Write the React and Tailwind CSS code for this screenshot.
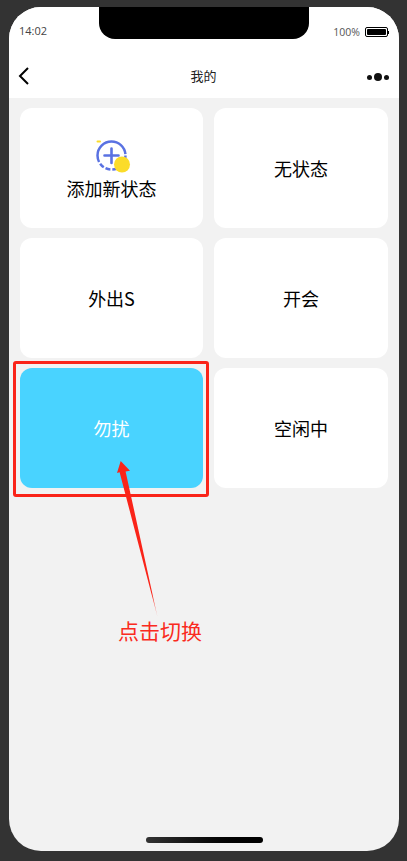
const font = { fontFamily: '"Noto Sans CJK SC", "Liberation Sans", sans-serif' };

function Card({ children, className = "" }) {
  return (
    <div className={`h-[120px] rounded-[12px] flex flex-col items-center justify-center text-[18px] leading-[24px] ${className}`}>
      {children}
    </div>
  );
}

function AddIcon() {
  return (
    <svg width="38" height="34" viewBox="0 0 38 34" className="block">
      <rect x="3.5" y="0.5" width="4.5" height="2" rx="1" fill="#fbdc2a" />
      <circle cx="18.5" cy="15.5" r="14" fill="none" stroke="#5a72e2" strokeWidth="2.5" strokeDasharray="14 2 5 2 5 2 5 2 49 2" />
      <circle cx="29" cy="24.5" r="8" fill="#fbdc2a" />
      <path d="M18.5 8.5V23M11.5 15.5H25.5" stroke="#5a72e2" strokeWidth="2.6" strokeLinecap="round" fill="none" />
    </svg>
  );
}

export default function App() {
  return (
    <div style={font} className="relative w-[407px] h-[861px] overflow-hidden bg-[#333333] pt-[7px] px-[9px]">
      <div className="relative w-[390px] h-[844px] rounded-[32px] overflow-hidden bg-[#f2f2f2] flex flex-col text-black">
        <div className="absolute left-[90px] top-0 w-[210px] h-[32px] bg-black rounded-b-[16px]" />
        <div className="bg-white h-[91px] shrink-0">
          <div className="h-[48px] flex items-start justify-between pl-[10px] pr-[10px] pt-[16px]">
            <span className="text-[11px] leading-[16px] text-[#444444]" style={{ fontFamily: '"Open Sans", sans-serif' }}>14:02</span>
            <div className="flex items-center gap-[5px] pt-[1px]">
              <span className="text-[10.5px] leading-[16px] text-[#555555]" style={{ fontFamily: '"Open Sans", sans-serif' }}>100%</span>
              <div className="flex items-center">
                <div className="w-[23px] h-[10px] border border-black rounded-[2px] p-[1px]">
                  <div className="w-full h-full bg-black rounded-[1px]" />
                </div>
                <div className="w-[1px] h-[3px] bg-black" />
              </div>
            </div>
          </div>
          <div className="h-[43px] flex items-center justify-between pl-[9px] pr-[10px]">
            <div className="w-[40px] flex items-center">
              <svg width="11" height="18" viewBox="0 0 11 18" className="mb-[1px]">
                <path d="M10 1L2 9L10 17" fill="none" stroke="#000" strokeWidth="2" />
              </svg>
            </div>
            <span className="text-[13px] leading-[16px] text-[#222222] mb-[1px]">我的</span>
            <div className="w-[40px] flex items-center justify-end gap-[2px] mt-[1px]">
              <span className="w-[5px] h-[5px] rounded-full bg-[#111111]" />
              <span className="w-[8px] h-[8px] rounded-full bg-[#111111]" />
              <span className="w-[5px] h-[5px] rounded-full bg-[#111111]" />
            </div>
          </div>
        </div>

        <div className="grid grid-cols-[183px_174px] gap-x-[11px] gap-y-[10px] pl-[11px] pt-[10px]">
          <Card className="bg-white pt-[3px]">
            <AddIcon />
            <span className="mt-[2px]">添加新状态</span>
          </Card>
          <Card className="bg-white">无状态</Card>
          <Card className="bg-white">外出S</Card>
          <Card className="bg-white">开会</Card>
          <Card className="bg-[#49d3ff] text-white">勿扰</Card>
          <Card className="bg-white">空闲中</Card>
        </div>

        <div className="absolute left-[137px] bottom-[8px] w-[117px] h-[6px] rounded-full bg-gradient-to-r from-[#333333] to-black" />
      </div>

      <div className="absolute left-[13px] top-[361px] w-[196px] h-[136px] border-[3px] border-[#fa2419] rounded-[3px]" />
      <svg className="absolute left-[110px] top-[455px]" width="56" height="165" viewBox="0 0 56 165">
        <defs>
          <linearGradient id="fade" x1="0" y1="0" x2="0" y2="1">
            <stop offset="0.85" stopColor="#fa2419" />
            <stop offset="1" stopColor="#fa2419" stopOpacity="0.3" />
          </linearGradient>
        </defs>
        <path d="M10.7 6L7 18L9.6 17.2L47.5 162L15.6 16.4L20 15.7Z" fill="url(#fade)" />
      </svg>
      <span className="absolute left-[118px] top-[615px] text-[21px] leading-[30px] text-[#fa2a20]">点击切换</span>
    </div>
  );
}
